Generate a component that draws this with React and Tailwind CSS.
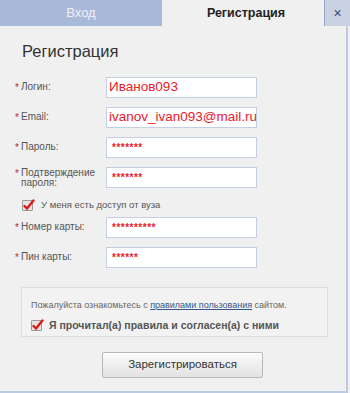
const fields = [
  { label: "Логин:", value: "Иванов093", big: true },
  { label: "Email:", value: "ivanov_ivan093@mail.ru", big: true },
  { label: "Пароль:", value: "*******" },
  { label: ["Подтверждение", "пароля:"], value: "*******" },
];

const cardFields = [
  { label: "Номер карты:", value: "**********" },
  { label: "Пин карты:", value: "******" },
];

function Check() {
  return (
    <span className="relative inline-block w-[11px] h-[11px] border border-[#9a9a9a] bg-[#e4e4e4] rounded-[1px] shrink-0">
      <svg className="absolute -top-[3px] -left-[1px]" width="14" height="14" viewBox="0 0 14 14">
        <path d="M2.5 8 L5 10.5 L11.5 2.5" fill="none" stroke="#e01818" strokeWidth="2.4" strokeLinecap="round" />
      </svg>
    </span>
  );
}

function Row({ f }) {
  return (
    <div className="flex items-center h-[21px]">
      <div className="w-[91px] flex items-start text-[10px] text-[#555] leading-[10px]">
        <span className="text-[#b03030] w-[6px] pt-[1px]">*</span>
        <span>
          {Array.isArray(f.label) ? (
            <>
              {f.label[0]}
              <br />
              {f.label[1]}
            </>
          ) : (
            f.label
          )}
        </span>
      </div>
      <div className="w-[151px] h-[21px] bg-white border border-[#c4d0e2] flex items-center px-[2px] overflow-hidden whitespace-nowrap">
        <span className={f.big ? "text-[13.5px] text-[#e8202a]" : "text-[10px] text-[#e8202a] font-bold tracking-[0.5px] pl-[3px]"}>
          {f.value}
        </span>
      </div>
    </div>
  );
}

export default function App() {
  return (
    <div className="w-[350px] h-[393px] bg-[#f0f0f0] font-['Liberation_Sans',Arial,sans-serif] flex flex-col overflow-hidden">
      <div className="flex h-[26px]">
        <div className="w-[162px] bg-[#a9b9d9] text-[#eef1f7] text-[13px] flex items-center justify-center">Вход</div>
        <div className="w-[162px] bg-[#f0f0f0] text-[#222] text-[12.5px] font-bold flex items-center justify-center pl-[6px]">Регистрация</div>
        <div className="flex-1 bg-[#c9d1e2] border-l border-[#98a6c6] text-[#3a4a7a] text-[14px] flex items-center justify-center">×</div>
      </div>
      <div className="flex-1 flex flex-col border-r-2 border-b-2 border-[#bccbe2] mr-[2px] pl-[15px]">
        <div className="text-[16.5px] text-[#333] pl-[7px] mt-[15px] leading-[20px]">Регистрация</div>
        <div className="flex flex-col gap-[9px] mt-[16px]">
          {fields.map((f, i) => (
            <Row key={i} f={f} />
          ))}
        </div>
        <div className="flex items-center gap-[8px] mt-[11px] pl-[7px] h-[12px]">
          <Check />
          <span className="text-[9.5px] text-[#555]">У меня есть доступ от вуза</span>
        </div>
        <div className="flex flex-col gap-[9px] mt-[6px]">
          {cardFields.map((f, i) => (
            <Row key={i} f={f} />
          ))}
        </div>
        <div className="mt-[19px] ml-[6px] w-[307px] h-[50px] border border-[#dddddd] bg-[#f2f2f2] pl-[9px] pt-[11px]">
          <div className="text-[9px] text-[#666] leading-[12px]">
            Пожалуйста ознакомьтесь с{" "}
            <span className="text-[#34588a] underline">правилами пользования</span> сайтом.
          </div>
          <div className="flex items-center gap-[7px] mt-[7px]">
            <Check />
            <span className="text-[10.5px] font-bold text-[#555]">Я прочитал(а) правила и согласен(а) с ними</span>
          </div>
        </div>
        <div className="flex justify-start mt-[15px] pl-[87px]">
          <button className="w-[161px] h-[26px] border border-[#b8b8b8] rounded-[2px] bg-gradient-to-b from-[#fbfbfb] to-[#e2e2e2] text-[11.5px] text-[#333]">
            Зарегистрироваться
          </button>
        </div>
      </div>
    </div>
  );
}
